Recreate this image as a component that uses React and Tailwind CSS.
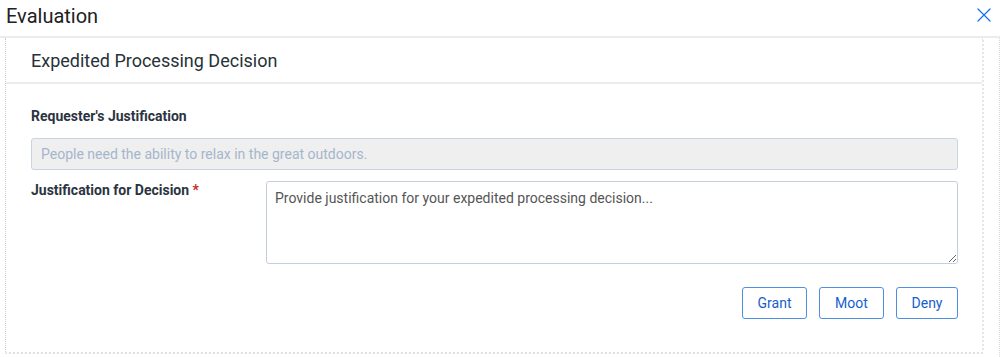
import { X } from 'lucide-react';

export default function App() {
  return (
    <div className="w-[1000px] h-[357px] bg-white overflow-hidden font-['Roboto',sans-serif] text-[#212121]">
      <header className="h-[38px] border-b-2 border-[#ececec] flex items-center justify-between pl-[6px] pr-[4px]">
        <h1 className="text-[20px] leading-none pb-[4px]">Evaluation</h1>
        <X size={24} strokeWidth={1.3} className="text-[#1a73e8] -mt-[6px]" />
      </header>
      <div className="flex h-[319px] border-r border-dotted border-[#d8d8d8]">
        <section className="ml-[5px] w-[979px] h-[316px] border-l border-dotted border-[#d0d0d0] border-r-2 border-r-[#e6e6e6] border-b-2 border-b-[#e0e0e0] rounded-br-[3px]">
          <div className="h-[46px] border-b-2 border-[#ececec] flex items-center pl-[25px]">
            <h2 className="text-[18px] text-[#263238]">Expedited Processing Decision</h2>
          </div>
          <div className="pl-[25px] pr-[24px] pt-[24px]">
            <p className="text-[14px] font-bold text-[#2b3440] leading-[17px]">Requester's Justification</p>
            <div className="mt-[13px] h-[32px] rounded-[3px] border border-[#c9d3e2] bg-[#efefef] flex items-center pl-[9px] text-[14px] text-[#a5b6cc]">
              People need the ability to relax in the great outdoors.
            </div>
            <div className="flex mt-[11px]">
              <label className="w-[235px] shrink-0 text-[14px] font-bold text-[#2b3440] pt-[1px] leading-[17px]">
                Justification for Decision <span className="text-[#c62828]">*</span>
              </label>
              <textarea
                className="flex-1 h-[83px] rounded-[3px] border border-[#c3cfe0] px-[8px] py-[6px] text-[14px] text-[#333] placeholder:text-[#555] outline-none resize-y"
                placeholder="Provide justification for your expedited processing decision..."
              />
            </div>
            <div className="flex justify-end gap-[12px] mt-[23px]">
              {['Grant', 'Moot', 'Deny'].map((t, i) => (
                <button
                  key={t}
                  className={`${i === 2 ? 'w-[62px]' : 'w-[65px]'} h-[32px] rounded-[3px] border border-[#4d8fe0] text-[14px] text-[#1560cf] bg-white`}
                >
                  {t}
                </button>
              ))}
            </div>
          </div>
        </section>
      </div>
    </div>
  );
}
